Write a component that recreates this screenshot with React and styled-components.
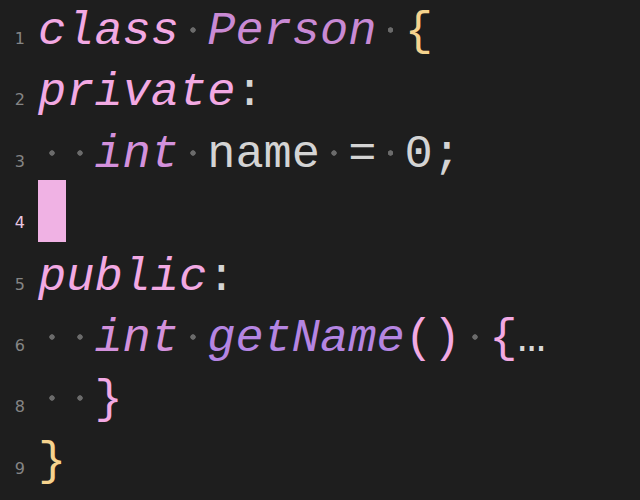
import React from 'react';
import styled, { createGlobalStyle } from 'styled-components';

const GlobalStyle = createGlobalStyle`
  html, body {
    margin: 0;
    padding: 0;
    background: #1e1e1e;
    overflow: hidden;
  }
`;

// Palette pulled from the editor theme
const colors = {
  keyword: '#f2a9e3',
  type: '#c98ad4',
  storage: '#d391dc',
  fn: '#b585e2',
  plain: '#d4d4d4',
  punct: '#f2a9e3',
  brace: '#f6d38e',
  ws: '#6b6b6b',
};

const Editor = styled.div`
  display: flex;
  flex-direction: column;
  width: 640px;
  height: 504px;
  margin-top: -4px;
  background: #1e1e1e;
  font-family: 'Liberation Mono', 'DejaVu Sans Mono', monospace;
`;

// each row is 61.4px; the top padding drops the baseline to where the theme font sits
const Line = styled.div`
  display: flex;
  align-items: baseline;
  box-sizing: border-box;
  height: 61.4px;
  padding-top: 10px;
  line-height: 51.4px;
`;

const LineNo = styled.span`
  flex: none;
  width: 25px;
  padding-right: 13px;
  text-align: right;
  font-family: 'DejaVu Sans', sans-serif;
  font-size: 16px;
  color: ${(p) => (p.$active ? '#e8c6e2' : '#858585')};
`;

const Code = styled.span`
  font-size: 47px;
  white-space: pre;
  color: ${colors.plain};
`;

const Tok = styled.span`
  color: ${(p) => p.$color};
  font-style: ${(p) => (p.$italic ? 'italic' : 'normal')};
`;

// rendered whitespace: a small round dot one cell wide
const Dot = styled.span`
  display: inline-block;
  width: 0.6em;
  height: 20px;
  background: radial-gradient(circle at 50% 6px, ${colors.ws} 2.4px, transparent 3px);
`;

// block caret fills the whole row, so it reaches back up over the padding
const Cursor = styled.span`
  display: inline-block;
  width: 28px;
  height: 61.4px;
  margin-top: -10px;
  vertical-align: top;
  background: #f0b2e4;
`;

const Fold = styled.span`
  color: #d8d8d8;
`;

const sp = (key) => <Dot key={key} />;

const lines = [
  {
    n: 1,
    tokens: [
      <Tok key="a" $color={colors.keyword} $italic>class</Tok>,
      sp('b'),
      <Tok key="c" $color={colors.type} $italic>Person</Tok>,
      sp('d'),
      <Tok key="e" $color={colors.brace}>{'{'}</Tok>,
    ],
  },
  {
    n: 2,
    tokens: [
      <Tok key="a" $color={colors.keyword} $italic>private</Tok>,
      <Tok key="b" $color={colors.plain}>:</Tok>,
    ],
  },
  {
    n: 3,
    tokens: [
      sp('a'),
      sp('b'),
      <Tok key="c" $color={colors.storage} $italic>int</Tok>,
      sp('d'),
      <Tok key="e" $color={colors.plain}>name</Tok>,
      sp('f'),
      <Tok key="g" $color={colors.plain}>=</Tok>,
      sp('h'),
      <Tok key="i" $color={colors.plain}>0;</Tok>,
    ],
  },
  { n: 4, active: true, tokens: [<Cursor key="a" />] },
  {
    n: 5,
    tokens: [
      <Tok key="a" $color={colors.keyword} $italic>public</Tok>,
      <Tok key="b" $color={colors.plain}>:</Tok>,
    ],
  },
  {
    n: 6,
    tokens: [
      sp('a'),
      sp('b'),
      <Tok key="c" $color={colors.storage} $italic>int</Tok>,
      sp('d'),
      <Tok key="e" $color={colors.fn} $italic>getName</Tok>,
      <Tok key="f" $color={colors.punct}>()</Tok>,
      sp('g'),
      <Tok key="h" $color={colors.punct}>{'{'}</Tok>,
      <Fold key="i">…</Fold>,
    ],
  },
  {
    n: 8,
    tokens: [
      sp('a'),
      sp('b'),
      <Tok key="c" $color={colors.punct}>{'}'}</Tok>,
    ],
  },
  { n: 9, tokens: [<Tok key="a" $color={colors.brace}>{'}'}</Tok>] },
];

export default function App() {
  return (
    <>
      <GlobalStyle />
      <Editor>
        {lines.map((line) => (
          <Line key={line.n}>
            <LineNo $active={line.active}>{line.n}</LineNo>
            <Code>{line.tokens}</Code>
          </Line>
        ))}
      </Editor>
    </>
  );
}
